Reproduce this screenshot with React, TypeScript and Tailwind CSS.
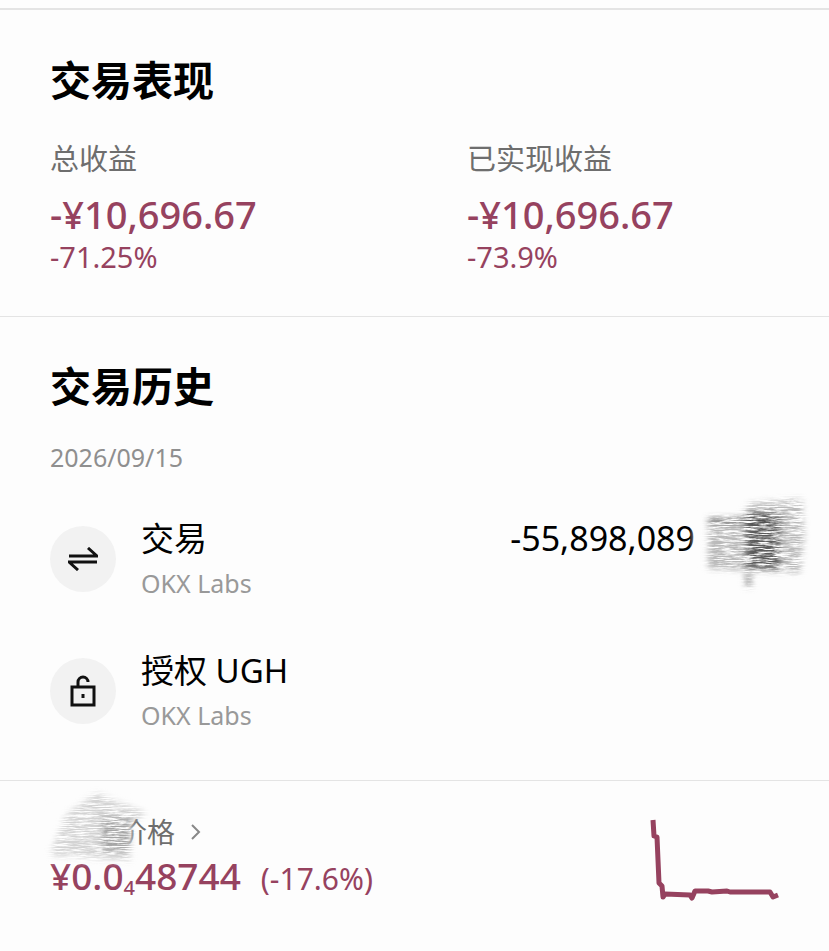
import React from "react";

const font = { fontFamily: '"Noto Sans", "Noto Sans CJK SC", sans-serif' };

// pencil-like redaction mark: blurred shapes cut through streaky noise
const Scribble = ({
  id,
  width,
  height,
  seed,
  className,
  wash,
  children,
}: {
  id: string;
  width: number;
  height: number;
  seed: number;
  className: string;
  wash: React.ReactNode;
  children: React.ReactNode;
}) => (
  <svg width={width} height={height} viewBox={`0 0 ${width} ${height}`} className={className}>
    <defs>
      <filter id={`${id}-soft`} x="-20%" y="-20%" width="140%" height="140%">
        <feGaussianBlur stdDeviation="3" />
      </filter>
      <filter id={id} x="-10%" y="-10%" width="120%" height="120%" colorInterpolationFilters="sRGB">
        <feGaussianBlur in="SourceGraphic" stdDeviation="3" result="b" />
        <feTurbulence type="fractalNoise" baseFrequency="0.06 1.2" numOctaves="4" seed={seed} result="n" />
        <feColorMatrix in="n" type="matrix" values="0 0 0 0 0 0 0 0 0 0 0 0 0 0 0 3.4 0 0 0 -1.05" result="m" />
        <feComposite in="b" in2="m" operator="in" />
      </filter>
    </defs>
    <g filter={`url(#${id}-soft)`} fill="#fdfdfd">
      {wash}
    </g>
    <g filter={`url(#${id})`}>{children}</g>
  </svg>
);

const Stat = ({ label, value, percent }: { label: string; value: string; percent: string }) => (
  <div className="flex flex-col">
    <div className="text-[29px] leading-[36px] text-[#6e6e6e]">{label}</div>
    <div className="mt-[15px] text-[38px] leading-[44px] font-medium text-[#96425f]">{value}</div>
    <div className="mt-[5px] text-[29px] leading-[32px] text-[#96425f]">{percent}</div>
  </div>
);

const HistoryRow = ({
  icon,
  title,
  children,
}: {
  icon: React.ReactNode;
  title: string;
  children?: React.ReactNode;
}) => (
  <div className="relative flex h-[132px] items-center pl-[50px]">
    <div className="flex h-[66px] w-[66px] items-center justify-center rounded-full bg-[#f2f2f2]">{icon}</div>
    <div className="ml-[25px] flex -translate-y-[1px] flex-col">
      <div className="text-[33px] leading-[44px] text-black">{title}</div>
      <div className="mt-[6px] text-[25px] leading-[32px] text-[#999999]">OKX Labs</div>
    </div>
    {children}
  </div>
);

export default function App() {
  return (
    <div className="h-[951px] w-[829px] overflow-hidden bg-[#fdfdfd]" style={font}>
      <div className="h-[10px] border-b-2 border-[#e4e4e4]" />

      <section className="h-[307px] border-b border-[#e4e4e4] px-[50px] pt-[45px]">
        <h2 className="text-[41px] leading-[50px] font-bold text-black">交易表现</h2>
        <div className="mt-[36px] grid grid-cols-[417px_1fr]">
          <Stat label="总收益" value="-¥10,696.67" percent="-71.25%" />
          <Stat label="已实现收益" value="-¥10,696.67" percent="-73.9%" />
        </div>
      </section>

      <section className="h-[464px] border-b border-[#e4e4e4]">
        <h2 className="pt-[44px] pl-[50px] text-[41px] leading-[50px] font-bold text-black">交易历史</h2>
        <div className="mt-[30px] pl-[50px] text-[25px] leading-[32px] text-[#8f8f8f]">2026/09/15</div>
        <div className="mt-[20px]">
          <HistoryRow
            title="交易"
            icon={
              <svg width="30" height="24" viewBox="0 0 30 24" fill="none" stroke="#111" strokeWidth="3">
                <path d="M1 9h28L20 1" />
                <path d="M29 15H1l9 8" />
              </svg>
            }
          >
            <div className="ml-auto mr-[134px] -translate-y-[21px] text-[34px] leading-[44px] text-black">
              -55,898,089
            </div>
            <Scribble
              id="sc1"
              width={125}
              height={112}
              seed={17}
              className="absolute top-[-4px] left-[690px]"
              wash={<rect x="4" y="8" width="112" height="84" rx="12" />}
            >
              <path d="M18 30 L50 28 L60 14 L112 10 L114 50 L110 84 L18 80 Z" fill="#777" opacity="0.5" />
              <rect x="56" y="24" width="34" height="56" fill="#333" opacity="0.7" />
              <rect x="18" y="29" width="58" height="5" fill="#333" opacity="0.6" />
              <rect x="55" y="84" width="7" height="14" fill="#888" opacity="0.7" />
            </Scribble>
          </HistoryRow>
          <HistoryRow
            title="授权 UGH"
            icon={
              <svg width="26" height="32" viewBox="0 0 26 32" fill="none" stroke="#111" strokeWidth="3">
                <path d="M2 12h22v18H2z" />
                <path d="M8 12V7a5 5 0 0 1 10 0" />
                <path d="M13 19v4" />
              </svg>
            }
          />
        </div>
      </section>

      <section className="relative flex h-[169px] items-start justify-between pr-[47px] pl-[50px]">
        <div className="pt-[31px]">
          <div className="flex items-center text-[28px] leading-[40px] text-[#6e6e6e]">
            <span>UGH 价格</span>
            <svg width="12" height="18" viewBox="0 0 12 18" fill="none" stroke="#888" strokeWidth="2" className="ml-[15px]">
              <path d="M2 2l7 7-7 7" />
            </svg>
          </div>
          <div className="mt-[2px] flex items-baseline text-[#96425f]">
            <span className="text-[37px] leading-[44px] font-medium">¥0.0</span>
            <span className="translate-y-[5px] text-[20px] leading-[20px] font-medium">4</span>
            <span className="text-[37px] leading-[44px] font-medium">48744</span>
            <span className="ml-[20px] text-[30px] leading-[44px]">(-17.6%)</span>
          </div>
        </div>
        <Scribble
          id="sc2"
          width={125}
          height={90}
          seed={5}
          className="absolute top-[4px] left-[36px]"
          wash={<rect x="5" y="14" width="90" height="62" rx="10" />}
        >
          <path d="M14 70 L30 30 L60 8 L110 28 L94 40 L94 76 Z" fill="#aaa" opacity="0.5" />
          <rect x="66" y="32" width="28" height="34" fill="#777" opacity="0.5" />
        </Scribble>
        <svg width="134" height="84" viewBox="0 0 134 84" fill="none" className="mt-[37px]">
          <path
            d="M5 2l1 16 3 1 2 46 3 3 1 11 2-3 25 1 2 3 3-7h13l4 1 15-1 3 1h40l3 5 5-2"
            stroke="#96425f"
            strokeWidth="5"
            strokeLinejoin="round"
          />
        </svg>
      </section>
    </div>
  );
}
